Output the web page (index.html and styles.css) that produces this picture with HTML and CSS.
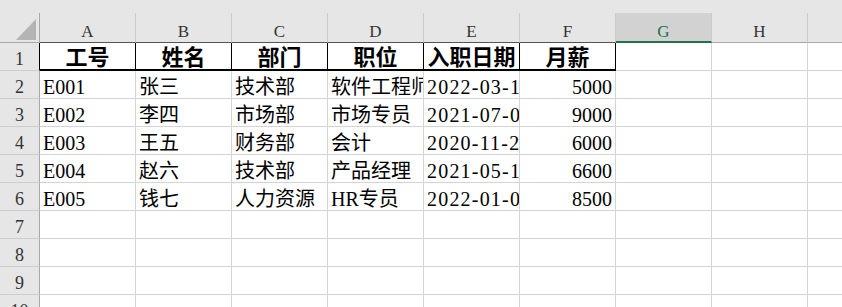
FILE: index.html
```html
<!DOCTYPE html>
<html lang="zh-CN">

<head>
  <meta charset="UTF-8" />
  <title>员工信息表</title>
  <link rel="stylesheet" href="styles.css">
</head>

<body>
  <div class="topbar"></div>

  <div class="sheet">
    <!-- column letters -->
    <div class="row cols">
      <div class="num corner">
        <svg width="20" height="21" viewBox="0 0 20 21"><polygon points="20,0 20,21 0,21" fill="#b4b4b4" /></svg>
      </div>
      <div class="in">A</div>
      <div class="in">B</div>
      <div class="in">C</div>
      <div class="in">D</div>
      <div class="in">E</div>
      <div class="in">F</div>
      <div class="sel">G</div>
      <div>H</div>
      <div></div>
    </div>

    <div class="row head">
      <div class="num">1</div>
      <div class="th">工号</div>
      <div class="th">姓名</div>
      <div class="th">部门</div>
      <div class="th">职位</div>
      <div class="th">入职日期</div>
      <div class="th">月薪</div>
      <div></div>
      <div></div>
      <div></div>
    </div>

    <div class="row">
      <div class="num">2</div>
      <div>E001</div>
      <div>张三</div>
      <div>技术部</div>
      <div>软件工程师</div>
      <div class="d">2022-03-15</div>
      <div class="n">5000</div>
      <div></div>
      <div></div>
      <div></div>
    </div>

    <div class="row">
      <div class="num">3</div>
      <div>E002</div>
      <div>李四</div>
      <div>市场部</div>
      <div>市场专员</div>
      <div class="d">2021-07-01</div>
      <div class="n">9000</div>
      <div></div>
      <div></div>
      <div></div>
    </div>

    <div class="row">
      <div class="num">4</div>
      <div>E003</div>
      <div>王五</div>
      <div>财务部</div>
      <div>会计</div>
      <div class="d">2020-11-20</div>
      <div class="n">6000</div>
      <div></div>
      <div></div>
      <div></div>
    </div>

    <div class="row">
      <div class="num">5</div>
      <div>E004</div>
      <div>赵六</div>
      <div>技术部</div>
      <div>产品经理</div>
      <div class="d">2021-05-10</div>
      <div class="n">6600</div>
      <div></div>
      <div></div>
      <div></div>
    </div>

    <div class="row">
      <div class="num">6</div>
      <div>E005</div>
      <div>钱七</div>
      <div>人力资源</div>
      <div>HR专员</div>
      <div class="d">2022-01-05</div>
      <div class="n">8500</div>
      <div></div>
      <div></div>
      <div></div>
    </div>

    <div class="row">
      <div class="num">7</div>
      <div></div><div></div><div></div><div></div><div></div><div></div><div></div><div></div><div></div>
    </div>
    <div class="row">
      <div class="num">8</div>
      <div></div><div></div><div></div><div></div><div></div><div></div><div></div><div></div><div></div>
    </div>
    <div class="row">
      <div class="num">9</div>
      <div></div><div></div><div></div><div></div><div></div><div></div><div></div><div></div><div></div>
    </div>
    <div class="row">
      <div class="num">10</div>
      <div></div><div></div><div></div><div></div><div></div><div></div><div></div><div></div><div></div>
    </div>
  </div>
</body>

</html>
```

FILE: styles.css
```css
/* General */
body {
  margin: 0;
  background: #fff;
  font-family: "Liberation Serif", "Noto Sans CJK SC", serif;
  color: #000;
  overflow: hidden;
}

.topbar {
  height: 13px;
  background: #e6e6e6;
}

/* Grid */
.row {
  display: flex;
  height: 28px;
}

.row > div {
  flex: 0 0 96px;
  box-sizing: border-box;
  border-right: 1px solid #d4d4d4;
  border-bottom: 1px solid #d4d4d4;
  overflow: hidden;
  white-space: nowrap;
  font-size: 20px;
  line-height: 22px;
  padding: 5px 3px 0;
}

.row > .n {
  text-align: right;
}

.row > .d {
  letter-spacing: 1.2px;
}

/* Row numbers */
.row > .num {
  flex-basis: 40px;
  background: #e6e6e6;
  border-right-color: #a8a8a8;
  border-bottom-color: #cdcdcd;
  color: #333;
  font-size: 18px;
  line-height: 20px;
  padding: 6px 0 0;
  text-align: center;
}

/* Column letters */
.cols {
  height: 30px;
}

.cols > div {
  background: #e6e6e6;
  color: #333;
  text-align: center;
}

.row.cols > div {
  font-size: 17px;
  line-height: 18px;
  padding-top: 10px;
  border-right-color: #cbcbcb;
  border-bottom-color: #a8a8a8;
}

.row.cols > .in {
  border-bottom-color: #555;
}

.row.cols > .sel {
  background: #d2d2d2;
  color: #217346;
  border-bottom: 2px solid #217346;
}

.row.cols > .corner {
  display: flex;
  justify-content: flex-end;
  align-items: flex-end;
  padding: 0 3px 2px 0;
  border-right-color: #a8a8a8;
}

/* Title row */
.head {
  height: 28px;
}

.head > .th {
  border-right-color: #000;
  border-bottom: 2px solid #000;
  font-size: 22px;
  font-weight: bold;
  line-height: 22px;
  padding-top: 4px;
  text-align: center;
}

.head > .num {
  border-right-color: #000;
}
```
